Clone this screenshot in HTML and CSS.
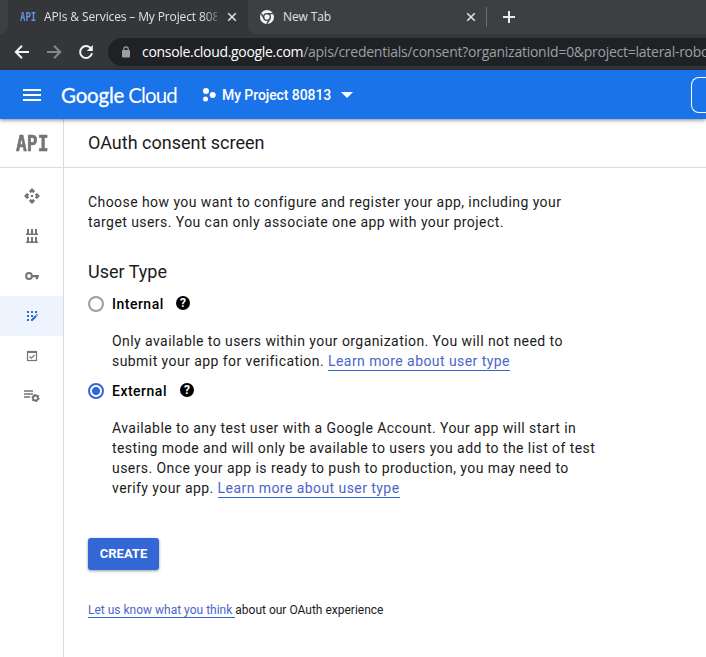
FILE: index.html
```html
<!DOCTYPE html>
<html lang="en">
<head>
<meta charset="utf-8">
<title>APIs &amp; Services – My Project 80813</title>
<link rel="stylesheet" href="styles.css">
</head>
<body>
<div class="tabs">
  <div class="edge"></div>
  <div class="tab active">
    <span class="favicon">API</span>
    <span class="tab-title">APIs &amp; Services – My Project 808</span>
    <svg class="close" width="10" height="10" viewBox="0 0 10 10"><path d="M1.2 1.2l7.6 7.6M8.8 1.2L1.2 8.8"/></svg>
  </div>
  <div class="tab second">
    <svg class="chrome" width="14" height="14" viewBox="0 0 14 14"><circle cx="7" cy="7" r="7" fill="#f1f3f4"/><g fill="none" stroke="#3c4043" stroke-width="1.3"><circle cx="7" cy="7" r="3.3"/><path d="M7 3.7h6M4.1 8.6L1.3 3.6M9.9 8.6L6.8 13.8"/></g></svg>
    <span class="tab-title newtab">New Tab</span>
    <svg class="close" width="10" height="10" viewBox="0 0 10 10"><path d="M1.2 1.2l7.6 7.6M8.8 1.2L1.2 8.8"/></svg>
  </div>
  <div class="divider"></div>
  <svg class="plus" width="12" height="12" viewBox="0 0 12 12"><path d="M6 0v12M0 6h12"/></svg>
</div>
<div class="toolbar">
  <svg class="nav" width="16" height="16" viewBox="0 0 16 16"><path d="M15 8H2M8 1.8L1.8 8 8 14.2"/></svg>
  <svg class="nav dim" width="16" height="16" viewBox="0 0 16 16"><path d="M1 8h13M8 1.8L14.2 8 8 14.2"/></svg>
  <svg class="nav" width="16" height="16" viewBox="0 0 16 16"><path d="M13.2 4.8A6 6 0 1 0 14 9.3"/><path d="M14.8 1v6H8.8z" fill="#f1f3f4" stroke="none"/></svg>
  <div class="omnibox">
    <svg class="lock" width="10" height="12" viewBox="0 0 10 12"><rect x="1" y="4" width="8" height="7.5" rx="1" fill="#9aa0a6"/><path d="M2.8 4.5V3a2.2 2.2 0 0 1 4.4 0v1.5" fill="none" stroke="#9aa0a6" stroke-width="1.2"/></svg>
    <span class="host">console.cloud.google.com</span><span class="path">/apis/credentials/consent?organizationId=0&amp;project=lateral-robo</span>
  </div>
</div>
<header class="bar">
  <div class="burger"><i></i><i></i><i></i></div>
  <div class="logo"><span class="google">Google</span><span class="cloud">Cloud</span></div>
  <svg class="dots" width="14" height="14" viewBox="0 0 14 14"><g fill="#fff"><circle cx="4" cy="3" r="3"/><circle cx="10.7" cy="7" r="3"/><circle cx="3.5" cy="11" r="2.5"/></g></svg>
  <span class="project">My Project 80813</span>
  <svg class="caret" width="12" height="6" viewBox="0 0 12 6"><path d="M0 0h12L6 6z" fill="#fff"/></svg>
  <div class="search"></div>
</header>
<div class="page">
  <nav class="side">
    <div class="api"><span>API</span></div>
    <div class="items">
      <div class="item"><svg width="16" height="16" viewBox="0 0 16 16" fill="#757575"><path d="M8 0l3 3-1.500 2.300L8 4 6.500 5.300 5 3zM8 16l3-3-1.500-2.300L8 12 6.500 10.700 5 13zM0 8l3-3 2.300 1.500L4 8l1.300 1.500L3 11zM16 8l-3-3-2.300 1.500L12 8l-1.300 1.500L13 11z"/><circle cx="8" cy="8" r="1.300"/></svg></div>
      <div class="item"><svg width="14" height="14" viewBox="0 0 14 14" fill="#757575"><path d="M2 0h2v4.500h2V0h2v4.500h2V0h2v4.500h1V6H1V4.500h1zM2 8h2v4.500h2V8h2v4.500h2V8h2v4.500h1V14H1v-1.500h1z"/></svg></div>
      <div class="item"><svg width="14" height="8" viewBox="0 0 14 8"><circle cx="4" cy="4" r="2.900" fill="none" stroke="#757575" stroke-width="2"/><path d="M7 2.900h7v2.300h-1v2h-2.300v-2H7z" fill="#757575"/></svg></div>
      <div class="item selected"><svg width="12" height="12" viewBox="0 0 12 12"><g fill="#3367d6"><path d="M1 1h2v2H1zM5 1h2v2H5zM9 1h2v2H9zM1 5h2v2H1zM5 5h2v2H5zM1 9h2v2H1z"/><path d="M5 9.500L9.500 5 11 6.500 6.500 11H5zM10 4.500l.8-.8 1.200 1.200-.7.800z"/></g></svg></div>
      <div class="item"><svg width="12" height="12" viewBox="0 0 12 12" fill="none" stroke="#757575"><rect x="1.500" y="1.500" width="9" height="9" stroke-width="1.200"/><path d="M1 2h10" stroke-width="2"/><path d="M3.500 6.500l1.700 1.600L8.500 5" stroke-width="1.200"/></svg></div>
      <div class="item"><svg width="16" height="14" viewBox="0 0 16 14"><path d="M0 2h9M0 5h9M0 8h6" stroke="#757575" stroke-width="1.500"/><circle cx="11.500" cy="9" r="2.500" fill="none" stroke="#757575" stroke-width="1.800"/><circle cx="11.500" cy="9" r="3.500" fill="none" stroke="#757575" stroke-width="1.200" stroke-dasharray="1.800 1.865"/></svg></div>
    </div>
  </nav>
  <main>
    <h1>OAuth consent screen</h1>
    <div class="content">
      <p>Choose how you want to configure and register your app, including your<br>target users. You can only associate one app with your project.</p>
      <h2>User Type</h2>
      <div class="option">
        <span class="radio"></span><span class="label internal">Internal</span>
        <span class="help">?</span>
      </div>
      <p class="desc">Only available to users within your organization. You will not need to<br>submit your app for verification. <a>Learn more about user type</a></p>
      <div class="option">
        <span class="radio on"></span><span class="label external">External</span>
        <span class="help">?</span>
      </div>
      <p class="desc">Available to any test user with a Google Account. Your app will start in<br>testing mode and will only be available to users you add to the list of test<br>users. Once your app is ready to push to production, you may need to<br>verify your app. <a>Learn more about user type</a></p>
      <button class="create">CREATE</button>
      <p class="feedback"><a>Let us know what you think&nbsp;</a>about our OAuth experience</p>
    </div>
  </main>
</div>
</body>
</html>
```
FILE: styles.css
```css
* { box-sizing: border-box; }
body { margin: 0; width: 706px; height: 657px; overflow: hidden; background: #fff; color: #1b1b1b; font-family: Roboto, "Liberation Sans", sans-serif; }
h1, h2, p { margin: 0; font-weight: 400; }
svg { flex: none; display: block; }

.tabs { display: flex; align-items: center; height: 34px; background: linear-gradient(90deg, #35363a 440px, #3c4043 440px); }
.edge { width: 8px; height: 34px; background: #3c4043; border-radius: 0 0 8px 0; }
.tab { display: flex; align-items: center; height: 34px; }
.active { width: 240px; padding-left: 12px; }
.favicon { width: 24px; font: bold 9px/12px "DejaVu Sans Mono", monospace; color: #6b8fe0; transform: scaleY(1.3); }
.tab-title { font: 12px/16px "Open Sans", sans-serif; letter-spacing: -.1px; color: #dfe1e5; white-space: nowrap; }
.active .tab-title { width: 173px; letter-spacing: -.13px; mask-image: linear-gradient(90deg, #000 158px, rgba(0,0,0,.25) 175px); }
.close { margin-left: 10px; stroke: #dfe1e5; stroke-width: 1.600; }
.second { width: 238px; padding-left: 12px; background: #3c4043; border-radius: 0 0 0 8px; flex: none; }
.newtab { width: 183px; margin-left: 9px; }
.second .close { margin-left: 0; }
.divider { width: 1px; height: 20px; background: #6c6f73; }
.plus { margin-left: 16px; stroke: #e8eaed; stroke-width: 2; }

.toolbar { display: flex; align-items: center; height: 36px; padding-left: 14px; gap: 16px; background: #35363a; }
.nav { fill: none; stroke: #f1f3f4; stroke-width: 2; }
.dim { stroke: #85878a; }
.omnibox { flex: none; display: flex; align-items: center; width: 598px; height: 28px; margin-left: -2px; padding-left: 13px; background: #202124; border-radius: 14px 0 0 14px; font: 14px/20px "Open Sans", sans-serif; white-space: nowrap; overflow: hidden; }
.lock { margin-right: 11px; }
.host { color: #fff; letter-spacing: -.31px; }
.path { color: #9aa0a6; letter-spacing: -.26px; }

.bar { position: relative; z-index: 1; display: flex; align-items: center; height: 49px; padding-left: 23px; background: #1a73e8; box-shadow: 0 1px 4px rgba(0,0,0,.5); color: #fff; }
.burger { display: flex; flex-direction: column; gap: 3px; width: 18px; flex: none; }
.burger i { height: 2px; background: #fff; }
.logo { display: flex; gap: 4px; width: 141px; padding-left: 20px; font: 20.500px/28px Lato, sans-serif; white-space: nowrap; }
.google { letter-spacing: -.2px; -webkit-text-stroke: .3px #fff; }
.cloud { letter-spacing: -.85px; }
.dots { margin-left: 20px; }
.project { margin-left: 6px; width: 109px; font-size: 14px; font-weight: 500; letter-spacing: -.08px; white-space: nowrap; }
.caret { margin-left: 10px; }
.search { margin-left: auto; width: 15px; height: 36px; border: 1px solid #fff; border-right: 0; border-radius: 8px 0 0 8px; }

.page { display: flex; height: 538px; }
.side { width: 64px; flex: none; border-right: 1px solid #dadce0; }
.api { height: 49px; padding-left: 16px; border-bottom: 1px solid #dadce0; font: bold 18px/50px "DejaVu Sans Mono", monospace; color: #757575; }
.api span { display: block; transform: scaleY(1.22); -webkit-text-stroke: .5px #757575; }
.items { padding-top: 8px; }
.item { display: flex; align-items: center; justify-content: center; height: 40px; }
.selected { background: #eef4fd; }

main { flex: 1; }
h1 { height: 49px; padding-left: 24px; border-bottom: 1px solid #dadce0; font-size: 18px; line-height: 48px; }
.content { padding: 24px 0 0 24px; white-space: nowrap; font-size: 14px; line-height: 20px; letter-spacing: .435px; }
h2 { margin-top: 28px; font-size: 18px; line-height: 24px; letter-spacing: 0; }
.option { display: flex; align-items: center; height: 20px; }
h2 + .option { margin-top: 10px; }
.radio { width: 16px; height: 16px; border: 2px solid #9e9e9e; border-radius: 50%; }
.on { border-color: #3367d6; background: radial-gradient(circle, #3367d6 3.700px, #fff 4.300px); }
.label { margin-left: 8px; font-weight: 500; color: #000; letter-spacing: .5px; }
.internal { width: 64px; }
.external { width: 68px; }
.help { width: 14px; height: 14px; margin-top: -2px; border-radius: 50%; background: #000; color: #fff; font-size: 12px; font-weight: 700; line-height: 14px; text-align: center; letter-spacing: 0; }
.desc { padding: 17px 0 10px 24px; }
a { color: #4a66c9; border-bottom: 1px solid #3367d6; }
.desc a { padding-bottom: 1px; }
.create { display: block; width: 71px; height: 32px; margin-top: 30px; padding: 0; border: 0; border-radius: 3px; background: #3367d6; box-shadow: 0 1px 3px rgba(0,0,0,.4); color: #fff; font: 700 13px/32px Roboto, sans-serif; }
.feedback { margin-top: 30px; font-size: 12px; letter-spacing: 0; }
```
